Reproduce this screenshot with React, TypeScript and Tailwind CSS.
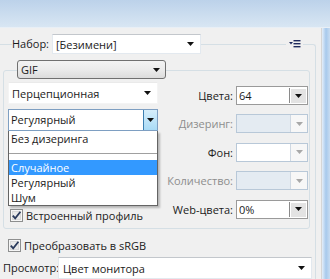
import type { ReactNode } from 'react';

function Arrow({ color = '#111' }: { color?: string }) {
  return (
    <svg width="7" height="4" viewBox="0 0 7 4" className="shrink-0">
      <path d="M0 0h7L3.5 4z" fill={color} />
    </svg>
  );
}

function Check({ label }: { label: string }) {
  return (
    <div className="flex items-center gap-[3px] h-[13px]">
      <svg width="13" height="13" viewBox="0 0 13 13" className="shrink-0">
        <rect x="0.5" y="0.5" width="12" height="12" fill="#f6f6f6" stroke="#8e8f8f" />
        <rect x="2.5" y="2.5" width="8" height="8" fill="#e9e9e9" stroke="#d8d8d8" />
        <path d="M2.8 6.6 L5.2 9.4 L10.4 2.8" fill="none" stroke="#2a3a5c" strokeWidth="1.8" />
      </svg>
      <span className="leading-none">{label}</span>
    </div>
  );
}

// white combo box, no button look
function Combo({ text, className = '' }: { text: string; className?: string }) {
  return (
    <div
      className={`flex items-center bg-white border border-[#e3e9ef] border-t-[#c3c7cc] pl-[3px] pr-[6px] ${className}`}
    >
      <span className="flex-1 leading-none">{text}</span>
      <Arrow />
    </div>
  );
}

function RightSelect({ text, kind }: { text?: string; kind: 'active' | 'disabled' | 'blank' }) {
  if (kind === 'active') {
    return (
      <div className="flex h-[19px] w-[72px] bg-white border border-[#9a9a9a]">
        <span className="flex-1 pl-[2px] leading-[17px]">{text}</span>
        <div className="w-[17px] flex items-center justify-center bg-[#e3e3e3] border-l border-[#8a8a8a] m-[1px] ml-0 shadow-[inset_1px_1px_0_#fff]">
          <Arrow />
        </div>
      </div>
    );
  }
  return (
    <div className="flex h-[19px] w-[72px] border border-[#b8c8d8]">
      <span className={`flex-1 ${kind === 'disabled' ? 'bg-[#e4ebf2]' : 'bg-white'}`} />
      <div className="w-[17px] flex items-center justify-center bg-[#f7f7f7] border-l border-[#cfd8e2]">
        <Arrow color="#a8a8a8" />
      </div>
    </div>
  );
}

function Field({ label, dim, children }: { label: string; dim?: boolean; children: ReactNode }) {
  return (
    <>
      <span className={`text-right leading-[19px] ${dim ? 'text-[#8d8d8d]' : ''}`}>{label}</span>
      {children}
    </>
  );
}

function MenuIcon() {
  return (
    <svg width="12" height="8" viewBox="0 0 12 8">
      <path d="M0 2h4L2 4.5z" fill="#1f2b5e" />
      <rect x="4.5" y="0" width="7" height="1.4" fill="#1f2b5e" />
      <rect x="4.5" y="3" width="7" height="1.4" fill="#1f2b5e" />
      <rect x="4.5" y="6" width="7" height="1.4" fill="#1f2b5e" />
    </svg>
  );
}

function Cursor() {
  return (
    <svg width="13" height="20" viewBox="0 0 13 20" className="absolute left-[110px] top-[169px]">
      <path
        d="M1 1 L1 16 L4.6 12.6 L7.2 18.4 L9.4 17.4 L6.8 11.8 L11.6 11.8 Z"
        fill="#000"
        stroke="#fff"
        strokeWidth="1"
        strokeLinejoin="round"
      />
    </svg>
  );
}

export default function App() {
  const items = ['Без дизеринга', null, 'Случайное', 'Регулярный', 'Шум'];

  return (
    <div className="w-[330px] h-[279px] overflow-hidden flex flex-col relative font-['Open_Sans','Noto_Sans',sans-serif] text-[11px] text-[#1b1b1b]">
      <div className="h-[28px] shrink-0 bg-gradient-to-b from-[#bcd2ea] to-[#d8e6f3] border-b border-[#e8eff6]" />

      <div className="flex flex-1">
        <div className="w-[322px] bg-[#f0f0f0] border-r border-[#d6d6d6] pt-[16px]">
          {/* outer group */}
          <div className="w-[316px] h-[300px] border-t border-r border-[#d5dfe5] rounded-tr-[3px]">
            <div className="flex items-center h-[20px] -mt-[11px]">
              <span className="ml-[12px] w-[40px] bg-[#f0f0f0] leading-[20px]">Набор:</span>
              <Combo text="[Безимени]" className="w-[149px] h-[20px]" />
              <div className="flex-1" />
              <div className="w-[17px] h-[10px] flex items-center justify-center bg-[#f0f0f0]">
                <MenuIcon />
              </div>
              <div className="w-[12px]" />
            </div>

            {/* inner group */}
            <div className="ml-[3px] mt-[16px] w-[307px] h-[159px] border border-[#d5dfe5] rounded-[3px]">
              <div className="-mt-[11px] ml-[13px] w-[149px] h-[19px] flex items-center pl-[3px] pr-[5px] rounded-[3px] border border-[#707070] bg-gradient-to-b from-[#f3f3f3] via-[#ebebeb] to-[#dcdcdc]">
                <span className="flex-1 leading-none">GIF</span>
                <Arrow />
              </div>

              <div className="flex">
                <div className="relative ml-[4px] w-[150px] pt-[3px]">
                  <Combo text="Перцепционная" className="h-[22px] border-[#f4f4f4] border-t-[#eaeaea]" />
                  <div className="mt-[5px] h-[22px] flex border border-[#7e9fc2] bg-white">
                    <span className="flex-1 pl-[2px] leading-[20px]">Регулярный</span>
                    <div className="w-[14px] flex items-center justify-center bg-gradient-to-b from-[#d6eefb] to-[#a9dbf6] border-l border-[#3c7fb1]">
                      <Arrow />
                    </div>
                  </div>

                  <div className="mt-[78px] ml-[2px]">
                    <Check label="Встроенный профиль" />
                  </div>

                  {/* open list */}
                  <div className="absolute left-0 top-[52px] w-[150px] bg-white border border-[#646464] border-t-0 shadow-[2px_2px_2px_rgba(0,0,0,0.25)] z-10">
                    {items.map((it, i) =>
                      it === null ? (
                        <div key={i} className="h-[14px] flex items-center">
                          <div className="h-px w-full bg-[#a0a0a0]" />
                        </div>
                      ) : (
                        <div
                          key={i}
                          className={`h-[15px] pl-[2px] leading-[15px] ${it === 'Случайное' ? 'bg-[#3399ff] text-white' : ''}`}
                        >
                          {it}
                        </div>
                      )
                    )}
                  </div>
                </div>

                <div className="ml-auto mr-[1px] mt-[7px] grid grid-cols-[auto_72px] gap-x-[3px] gap-y-[6px]">
                  <Field label="Цвета:">
                    <RightSelect kind="active" text="64" />
                  </Field>
                  <Field label="Дизеринг:" dim>
                    <RightSelect kind="disabled" />
                  </Field>
                  <Field label="Фон:">
                    <RightSelect kind="blank" />
                  </Field>
                  <Field label="Количество:" dim>
                    <RightSelect kind="disabled" />
                  </Field>
                  <Field label="Web-цвета:">
                    <RightSelect kind="active" text="0%" />
                  </Field>
                </div>
              </div>
            </div>

            <div className="mt-[10px] ml-[8px]">
              <Check label="Преобразовать в sRGB" />
            </div>

            <div className="flex items-center mt-[5px]">
              <span className="ml-[3px] w-[55px]">Просмотр:</span>
              <Combo text="Цвет монитора" className="w-[254px] h-[22px] pl-[4px]" />
            </div>
          </div>
        </div>
        <div className="w-[8px] bg-gradient-to-r from-[#e4eef9] via-[#a7c9ec] to-[#c8dcf1]" />
      </div>

      <Cursor />
    </div>
  );
}
